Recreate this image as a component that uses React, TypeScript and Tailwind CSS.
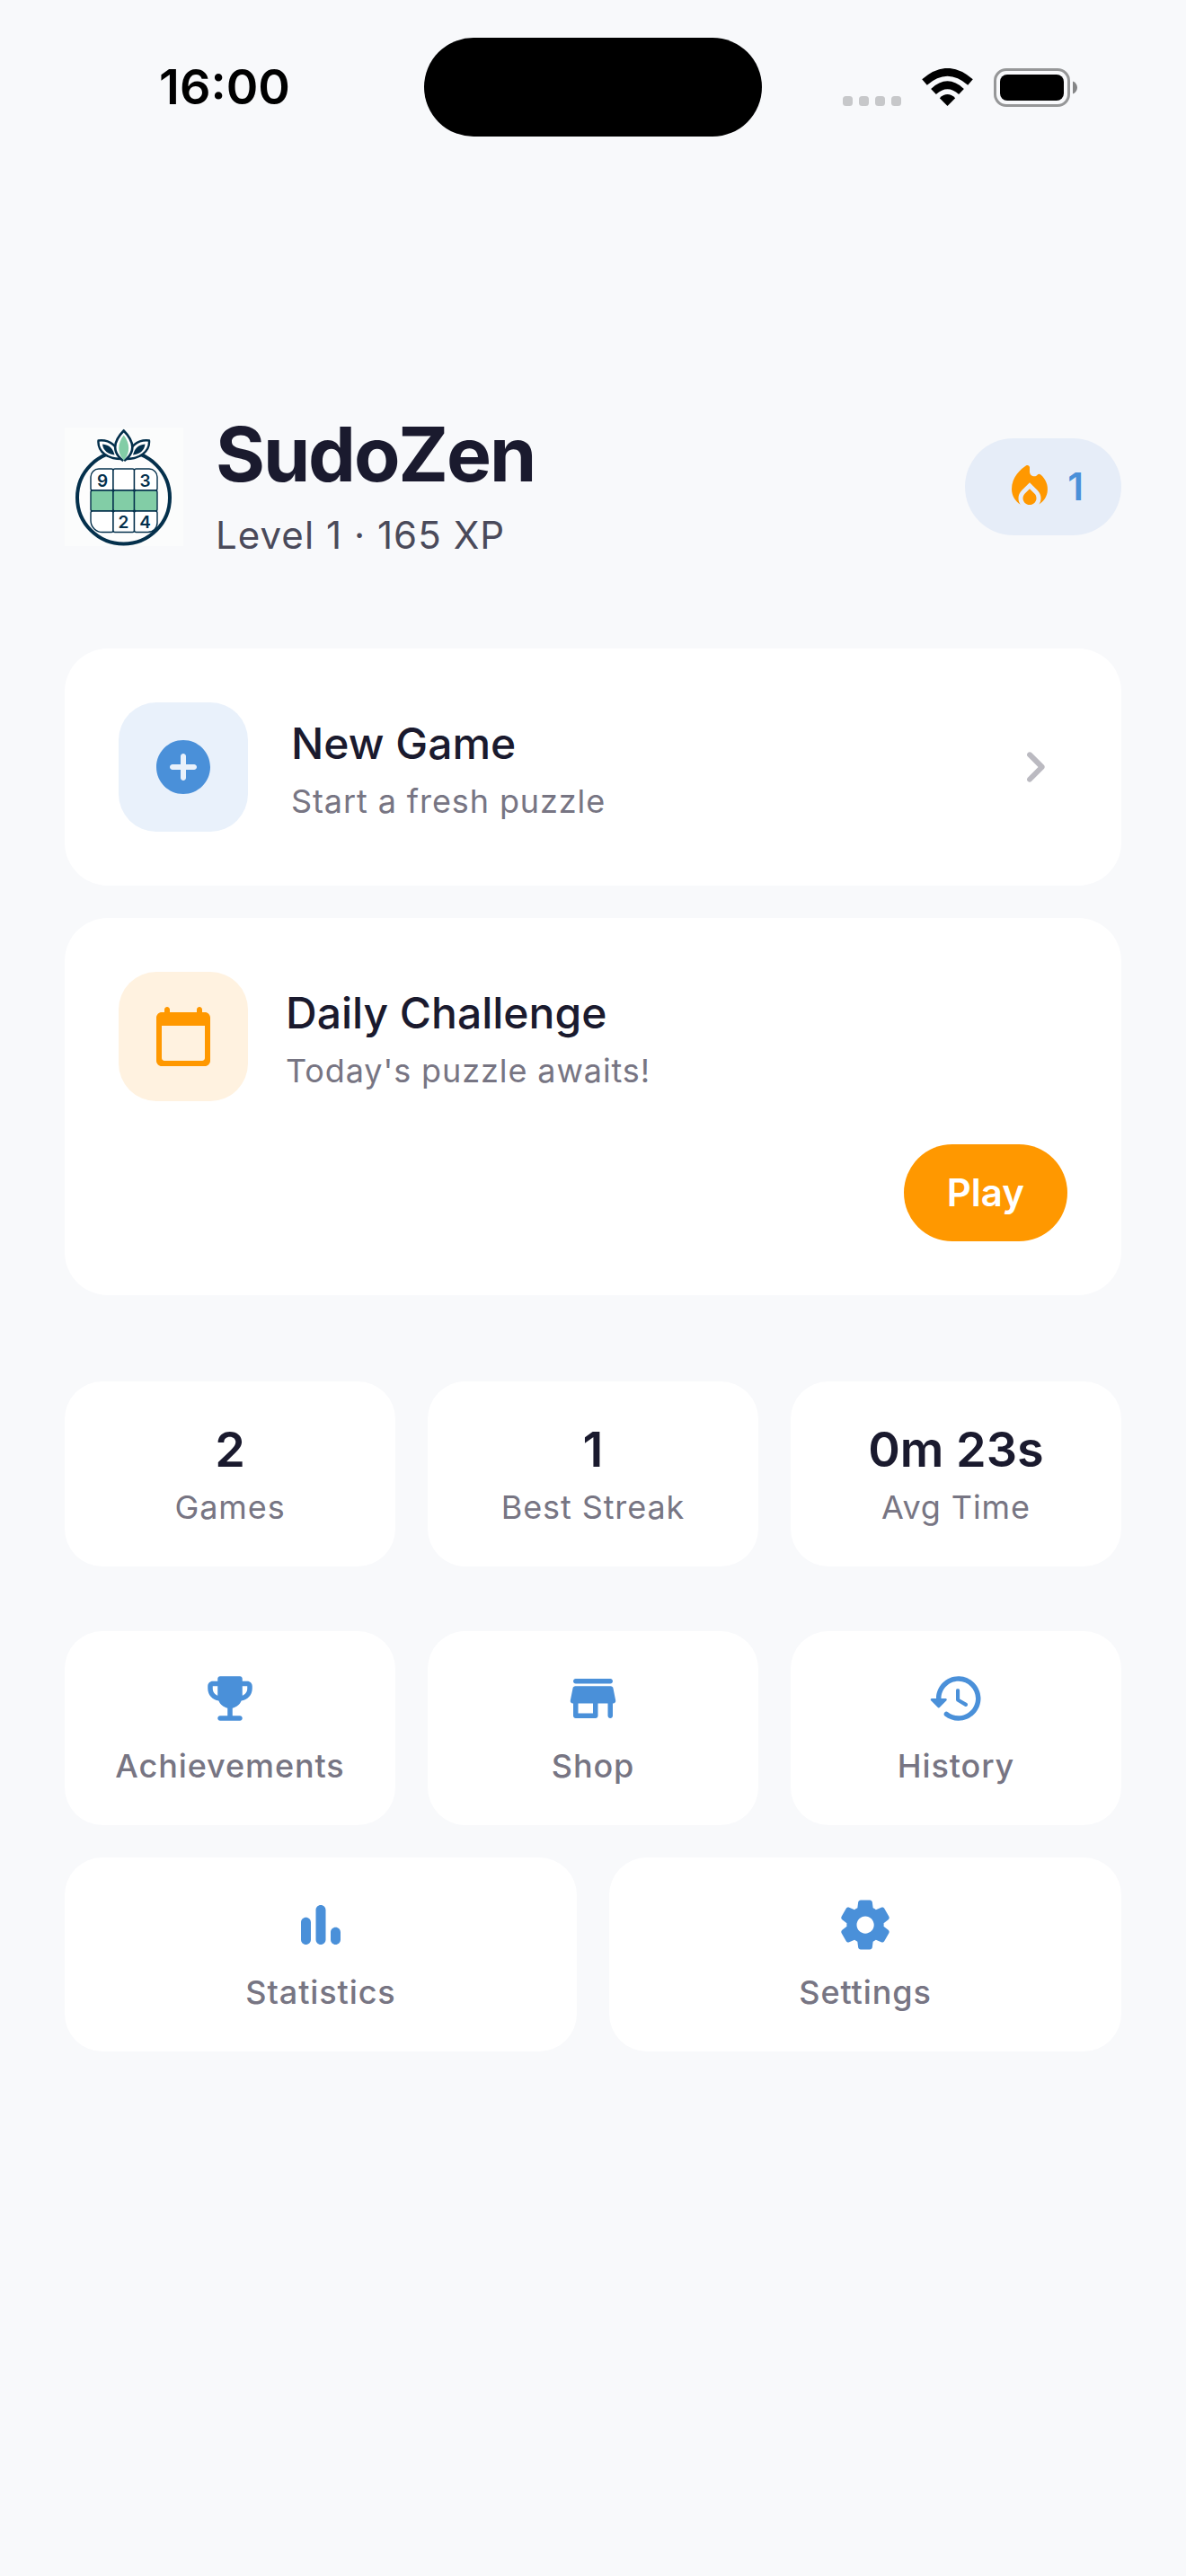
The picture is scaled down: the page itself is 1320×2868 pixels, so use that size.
import type { ReactNode } from "react";

const icons = {
  add: "M12 2C6.48 2 2 6.48 2 12s4.48 10 10 10 10-4.48 10-10S17.52 2 12 2zm4 11h-3v3c0 .55-.45 1-1 1s-1-.45-1-1v-3H8c-.55 0-1-.45-1-1s.45-1 1-1h3V8c0-.55.45-1 1-1s1 .45 1 1v3h3c.55 0 1 .45 1 1s-.45 1-1 1z",
  calendar:
    "M20 3h-1V2c0-.55-.45-1-1-1s-1 .45-1 1v1H7V2c0-.55-.45-1-1-1s-1 .45-1 1v1H4c-1.1 0-2 .9-2 2v16c0 1.1.9 2 2 2h16c1.1 0 2-.9 2-2V5c0-1.1-.9-2-2-2zm-1 18H5c-.55 0-1-.45-1-1V8h16v12c0 .55-.45 1-1 1z",
  chevron:
    "M9.29 6.71c-.39.39-.39 1.02 0 1.41L13.17 12l-3.88 3.88c-.39.39-.39 1.02 0 1.41.39.39 1.02.39 1.41 0l4.59-4.59c.39-.39.39-1.02 0-1.41L10.7 6.7c-.38-.38-1.02-.38-1.41.01z",
  fire: "M12 12.9l-2.13 2.09C9.31 15.55 9 16.28 9 17.06 9 18.68 10.35 20 12 20s3-1.32 3-2.94c0-.78-.31-1.52-.87-2.07L12 12.9zM15.56 6.55C14.38 8.02 12 7.19 12 5.3V3.4c0-.8-.86-1.28-1.53-.86C8.1 4.1 4 7.7 4 13c0 2.92 1.56 5.47 3.89 6.86C7.33 19.07 7 18.1 7 17.06c0-1.32.52-2.56 1.47-3.5L12 10.1l3.53 3.47c.95.93 1.47 2.17 1.47 3.5 0 1.02-.31 1.96-.85 2.75 1.89-1.15 3.29-3.06 3.71-5.3.59-3.16-.76-6.12-2.96-7.92-.42-.4-1-.36-1.34-.05z",
  trophy:
    "M19 5h-2V4c0-.55-.45-1-1-1H8c-.55 0-1 .45-1 1v1H5c-1.1 0-2 .9-2 2v1c0 2.55 1.92 4.63 4.39 4.94.63 1.5 1.98 2.63 3.61 2.96V19H8c-.55 0-1 .45-1 1s.45 1 1 1h8c.55 0 1-.45 1-1s-.45-1-1-1h-3v-3.1c1.63-.33 2.98-1.46 3.61-2.96C19.08 12.63 21 10.55 21 8V7c0-1.1-.9-2-2-2zM5 8V7h2v3.82C5.84 10.4 5 9.3 5 8zm14 0c0 1.3-.84 2.4-2 2.82V7h2v1z",
  store:
    "M5 6h14c.55 0 1-.45 1-1s-.45-1-1-1H5c-.55 0-1 .45-1 1s.45 1 1 1zm15.16 1.8c-.09-.46-.5-.8-.98-.8H4.82c-.48 0-.89.34-.98.8l-1 5c-.12.62.35 1.2.98 1.2H4v5c0 .55.45 1 1 1h8c.55 0 1-.45 1-1v-5h4v5c0 .55.45 1 1 1s1-.45 1-1v-5h.18c.63 0 1.1-.58.98-1.2l-1-5zM12 18H6v-4h6v4z",
  history:
    "M13.26 3C8.17 2.86 4 6.95 4 12H2.21c-.45 0-.67.54-.35.85l2.79 2.8c.2.2.51.2.71 0l2.79-2.8c.31-.31.09-.85-.36-.85H6c0-3.9 3.18-7.05 7.1-7 3.72.05 6.85 3.18 6.9 6.9.05 3.91-3.1 7.1-7 7.1-1.61 0-3.1-.55-4.28-1.48-.4-.31-.96-.28-1.32.08-.42.42-.39 1.13.08 1.49C9 20.29 10.91 21 13 21c5.05 0 9.14-4.17 9-9.26-.13-4.69-4.05-8.61-8.74-8.74zm-.51 5c-.41 0-.75.34-.75.75v3.68c0 .35.19.68.49.86l3.12 1.85c.36.21.82.09 1.03-.26.21-.36.09-.82-.26-1.03l-2.88-1.71v-3.4c0-.4-.34-.74-.75-.74z",
  bars: "M6 9c1.1 0 2 .9 2 2v7c0 1.1-.9 2-2 2s-2-.9-2-2v-7c0-1.1.9-2 2-2zM12 4c1.1 0 2 .9 2 2v12c0 1.1-.9 2-2 2s-2-.9-2-2V6c0-1.1.9-2 2-2zM18 13c1.1 0 2 .9 2 2v3c0 1.1-.9 2-2 2s-2-.9-2-2v-3c0-1.1.9-2 2-2z",
  settings:
    "M19.5 12c0-.23-.01-.45-.03-.68l1.86-1.41c.4-.3.51-.86.26-1.3l-1.87-3.23c-.25-.44-.79-.62-1.25-.42l-2.15.91c-.37-.26-.76-.49-1.17-.68l-.29-2.31c-.06-.5-.49-.88-.99-.88h-3.73c-.51 0-.94.38-1 .88l-.29 2.31c-.41.19-.8.42-1.17.68l-2.15-.91c-.46-.2-1-.02-1.25.42L2.41 8.62c-.25.44-.14.99.26 1.3l1.86 1.41c-.02.22-.03.44-.03.67s.01.45.03.68l-1.86 1.41c-.4.3-.51.86-.26 1.3l1.87 3.23c.25.44.79.62 1.25.42l2.15-.91c.37.26.76.49 1.17.68l.29 2.31c.06.5.49.88.99.88h3.73c.5 0 .93-.38.99-.88l.29-2.31c.41-.19.8-.42 1.17-.68l2.15.91c.46.2 1 .02 1.25-.42l1.87-3.23c.25-.44.14-.99-.26-1.3l-1.86-1.41c.03-.23.04-.45.04-.68zm-7.46 3.5c-1.93 0-3.5-1.57-3.5-3.5s1.57-3.5 3.5-3.5 3.5 1.57 3.5 3.5-1.57 3.5-3.5 3.5z",
};

type IconName = keyof typeof icons;

function Icon({ name, className }: { name: IconName; className: string }) {
  return (
    <svg viewBox="0 0 24 24" fill="currentColor" aria-hidden="true" className={className}>
      <path d={icons[name]} />
    </svg>
  );
}

function StatusBar() {
  return (
    <div className="grid grid-cols-[1fr_376px_1fr] items-center pt-[42px] text-black">
      <p className="pl-7 text-center text-[54px] leading-[64px] font-semibold">16:00</p>
      <div className="h-[110px] rounded-full bg-black" />
      <div className="flex items-center justify-center gap-[23px] pr-8">
        <svg width="65" height="43" viewBox="0 0 65 43" fill="#c7c8ca" aria-hidden="true">
          <rect x="0" y="31" width="11" height="11" rx="3.5" />
          <rect x="18" y="31" width="11" height="11" rx="3.5" />
          <rect x="36" y="31" width="11" height="11" rx="3.5" />
          <rect x="54" y="31" width="11" height="11" rx="3.5" />
        </svg>
        <svg width="57" height="43" viewBox="0 0 57 43" aria-hidden="true">
          <path d="M28.5 42 19.8 33.2Q28.5 24.8 37.2 33.2Z" />
          <path d="M13 26Q28.5 11.5 44 26" fill="none" stroke="#000" strokeWidth="8.4" />
          <path d="M3 15.5Q28.5-7 54 15.5" fill="none" stroke="#000" strokeWidth="8.4" />
        </svg>
        <svg width="93" height="43" viewBox="0 0 93 43" aria-hidden="true">
          <rect x="1.5" y="1.5" width="82" height="40" rx="12.5" fill="none" stroke="#969798" strokeWidth="3" />
          <rect x="7" y="7" width="71" height="29" rx="8" />
          <path d="M88 14.5c3 1 5 3.8 5 7s-2 6-5 7z" fill="#858687" />
        </svg>
      </div>
    </div>
  );
}

function Logo() {
  return (
    <svg viewBox="0 0 132 132" className="size-[132px] shrink-0" role="img" aria-label="SudoZen logo">
      <rect width="132" height="132" fill="#fbfcfc" />
      <circle cx="65.5" cy="78" r="51.5" fill="#fdfdfd" stroke="#04304c" strokeWidth="4" />
      <g stroke="#04304c" strokeWidth="2.4" fill="#fff" strokeLinejoin="round">
        <path d="M63 35C48 35 36.5 27 37.5 14.5 50 13 58 20 63 33z" />
        <path d="M68.5 35C83 35 95 27 94 14.5 81.5 13 73.5 20 68.5 33z" />
      </g>
      <g fill="#04304c">
        <path d="M42 18.5C50 19 54 24 55.5 30.5 48 29.5 43 26 42 18.5z" />
        <path d="M89.5 18.5C81.5 19 77.5 24 76 30.5 83.5 29.5 88.5 26 89.5 18.5z" />
      </g>
      <path d="M65.7 3.5C78 16 79 28 65.7 37.5 52.5 28 53.5 16 65.7 3.5z" fill="#fff" stroke="#04304c" strokeWidth="2.6" />
      <path d="M65.7 8.5C73 18 73 28 65.7 36.5 58.5 28 58.5 18 65.7 8.5z" fill="#82cda6" />
      <path d="M62 41 65.7 36.5 69.5 41z" fill="#fdfdfd" />
      <g stroke="#04304c" strokeWidth="1.4" fill="#fff">
        <path d="M29 55a9 9 0 0 1 9-9h14a2 2 0 0 1 2 2v20a2 2 0 0 1-2 2H31a2 2 0 0 1-2-2z" />
        <rect x="54" y="46" width="23.5" height="24" rx="2" />
        <path d="M77.5 48a2 2 0 0 1 2-2H94a9 9 0 0 1 9 9v13a2 2 0 0 1-2 2H79.5a2 2 0 0 1-2-2z" />
        <g fill="#82cda6">
          <rect x="29" y="70" width="25" height="23" rx="2" />
          <rect x="54" y="70" width="23.5" height="23" rx="2" />
          <rect x="77.5" y="70" width="25.5" height="23" rx="2" />
        </g>
        <path d="M29 95a2 2 0 0 1 2-2h21a2 2 0 0 1 2 2v19.5a2 2 0 0 1-2 2H42a13 13 0 0 1-13-13z" />
        <rect x="54" y="93" width="23.5" height="23.5" rx="2" />
        <path d="M77.5 95a2 2 0 0 1 2-2H101a2 2 0 0 1 2 2v11a10.5 10.5 0 0 1-10.5 10.5h-13a2 2 0 0 1-2-2z" />
      </g>
      <g fill="#04304c" fontSize="19" fontWeight="600" textAnchor="middle">
        <text x="42" y="66">9</text>
        <text x="89.5" y="66">3</text>
        <text x="65.5" y="112">2</text>
        <text x="89.5" y="112">4</text>
      </g>
    </svg>
  );
}

function CardText({ title, subtitle }: { title: string; subtitle: string }) {
  return (
    <div className="flex flex-col gap-1 text-left">
      <h2 className="text-[48px] leading-[72px] font-medium text-[#1a1a2e]">{title}</h2>
      <p className="text-4xl/[48px] tracking-wide text-[#777583]">{subtitle}</p>
    </div>
  );
}

function IconTile({ className, children }: { className: string; children: ReactNode }) {
  return (
    <div className={`flex size-36 shrink-0 items-center justify-center rounded-[42px] ${className}`}>
      {children}
    </div>
  );
}

function MenuButton({ icon, label }: { icon: IconName; label: string }) {
  return (
    <button
      type="button"
      className="flex flex-1 basis-0 flex-col items-center rounded-[42px] bg-white py-[42px]"
    >
      <Icon name={icon} className="size-[66px] text-[#4a90d9]" />
      <span className="mt-[18px] text-4xl/[48px] font-medium tracking-wide text-[#777583]">{label}</span>
    </button>
  );
}

export default function App() {
  const stats = [
    { value: "2", label: "Games" },
    { value: "1", label: "Best Streak" },
    { value: "0m 23s", label: "Avg Time" },
  ];

  const menu: { icon: IconName; label: string }[][] = [
    [
      { icon: "trophy", label: "Achievements" },
      { icon: "store", label: "Shop" },
      { icon: "history", label: "History" },
    ],
    [
      { icon: "bars", label: "Statistics" },
      { icon: "settings", label: "Settings" },
    ],
  ];

  return (
    <div className="min-h-screen bg-[#f8f9fb] font-['Inter',sans-serif] text-[#1a1a2e]">
      <StatusBar />

      <main className="px-[72px] pt-[300px] pb-24">
        <header className="flex items-center">
          <Logo />
          <div className="ml-9 flex-1">
            <h1 className="text-[84px] leading-[108px] font-bold tracking-tight">SudoZen</h1>
            <p className="text-[42px] leading-[72px] tracking-wide text-[#4a4a5a]">Level 1 · 165 XP</p>
          </div>
          <div className="flex h-[108px] items-center gap-3 rounded-full bg-[#e6edf8] px-[42px] text-[#4a90d9]">
            <Icon name="fire" className="size-[60px] text-[#ff9800]" />
            <span className="text-[42px] leading-[60px] font-semibold">1</span>
          </div>
        </header>

        <section className="mt-[90px] flex flex-col gap-9">
          <button type="button" className="flex items-center rounded-[48px] bg-white p-[60px]">
            <IconTile className="mr-12 bg-[#e9f1fb]">
              <Icon name="add" className="size-[72px] text-[#4a90d9]" />
            </IconTile>
            <CardText title="New Game" subtitle="Start a fresh puzzle" />
            <Icon name="chevron" className="ml-auto size-[72px] text-[#bbbac1]" />
          </button>

          <article className="flex flex-col gap-12 rounded-[48px] bg-white p-[60px]">
            <div className="flex items-center">
              <IconTile className="mr-[42px] bg-[#fff2e0]">
                <Icon name="calendar" className="size-[72px] text-[#ff9800]" />
              </IconTile>
              <CardText title="Daily Challenge" subtitle="Today's puzzle awaits!" />
            </div>
            <button
              type="button"
              className="h-[108px] self-end rounded-full bg-[#ff9800] px-12 text-[42px] leading-[60px] font-semibold text-white"
            >
              Play
            </button>
          </article>
        </section>

        <section className="mt-24 grid grid-cols-3 gap-9">
          {stats.map((stat) => (
            <div key={stat.label} className="rounded-[42px] bg-white py-[42px] text-center">
              <p className="text-[54px] leading-[68px] font-semibold">{stat.value}</p>
              <p className="mt-1.5 text-4xl/[48px] tracking-wide text-[#777583]">{stat.label}</p>
            </div>
          ))}
        </section>

        <nav className="mt-[72px] flex flex-col gap-9">
          {menu.map((row) => (
            <div key={row[0].label} className="flex gap-9">
              {row.map((item) => (
                <MenuButton key={item.label} icon={item.icon} label={item.label} />
              ))}
            </div>
          ))}
        </nav>
      </main>
    </div>
  );
}
